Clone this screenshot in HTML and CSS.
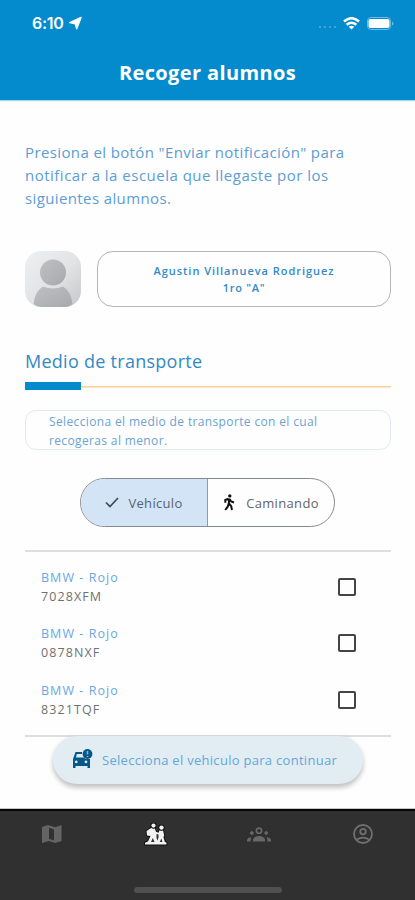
FILE: index.html
```html
<!DOCTYPE html>
<html lang="es">
<head>
<meta charset="utf-8">
<title>Recoger alumnos</title>
<link rel="stylesheet" href="styles.css">
</head>
<body>
<div class="screen">
  <header class="header">
    <div class="status">
      <span class="time">6:10</span>
      <svg class="location" width="13" height="14" viewBox="0 0 14 14"><path d="M13 1 8.300 13.200 6.700 7.800.8 6.600Z" fill="#fff" stroke="#fff" stroke-width="1.500" stroke-linejoin="round"/></svg>
      <span class="signal"><i></i><i></i><i></i><i></i></span>
      <svg class="wifi" width="17" height="13" viewBox="0 0 17 13" fill="none" stroke="#fff" stroke-width="2.600"><path d="M1 4.500Q8.500-2 16 4.500M3.700 7.700Q8.500 3.800 13.300 7.700"/><path d="M5.700 9.700Q8.500 7.700 11.300 9.700L8.500 12.600Z" fill="#fff" stroke="none"/></svg>
      <svg class="battery" width="27" height="13" viewBox="0 0 27 13"><rect x=".5" y=".5" width="23" height="12" rx="3.500" fill="none" stroke="#6bbce4"/><rect x="1.500" y="2" width="21" height="9" rx="2" fill="#fff"/><path d="M25 4.500v4q1.500-.6 1.500-2t-1.500-2Z" fill="#6bbce4"/></svg>
    </div>
    <h1 class="title">Recoger alumnos</h1>
  </header>
  <main class="content">
    <p class="intro">Presiona el botón "Enviar notificación" para<br><span class="intro-wide">notificar a la escuela que llegaste por los</span><br>siguientes alumnos.</p>
    <section class="student">
      <svg class="avatar" width="56" height="56" viewBox="0 0 56 56">
        <defs>
          <linearGradient id="bg" x1="0" y1="0" x2="1" y2="1"><stop offset="0" stop-color="#eff0f1"/><stop offset=".55" stop-color="#e1e2e3"/><stop offset="1" stop-color="#c5c7c9"/></linearGradient>
          <linearGradient id="person" x1="0" y1="0" x2="1" y2="1"><stop offset="0" stop-color="#bec1c3"/><stop offset="1" stop-color="#a7a9ab"/></linearGradient>
        </defs>
        <rect width="56" height="56" rx="16" fill="url(#bg)"/>
        <circle cx="28" cy="21.500" r="13" fill="url(#person)"/>
        <path d="M8.500 53Q10 40 18 35.500Q28 39.500 38 35.500Q46 40 47.500 53Q44 56 39 56H16Q12 56 8.500 53Z" fill="url(#person)"/>
      </svg>
      <div class="student-card"><strong>Agustin Villanueva Rodriguez</strong><strong class="grade">1ro "A"</strong></div>
    </section>
    <h2 class="section-title">Medio de transporte</h2>
    <div class="rule"></div>
    <p class="hint">Selecciona el medio de transporte con el cual<br>recogeras al menor.</p>
    <div class="segments">
      <button class="segment selected"><svg width="14" height="11" viewBox="0 0 14 11"><path d="m1 5.500 4 4L13 1" fill="none" stroke="#3e4852" stroke-width="1.600"/></svg><span>Vehículo</span></button>
      <button class="segment"><svg class="walk" width="12" height="17" viewBox="0 0 12 17"><circle cx="6.800" cy="1.900" r="1.700" fill="#111"/><path d="M6.200 4.500 5.800 9.800M5.500 4.700 2.300 6v2.800M6.500 5l1.700 2.500 2.800 1M5.700 9.500l-1 3.200L2.200 16M6 9.500l2.200 2.700L9 16" fill="none" stroke="#111" stroke-width="2"/></svg><span>Caminando</span></button>
    </div>
    <ul class="vehicles">
      <li><div><span class="model">BMW - Rojo</span><span class="plate">7028XFM</span></div><span class="check"></span></li>
      <li><div><span class="model">BMW - Rojo</span><span class="plate">0878NXF</span></div><span class="check"></span></li>
      <li><div><span class="model">BMW - Rojo</span><span class="plate">8321TQF</span></div><span class="check"></span></li>
    </ul>
    <button class="continue">
      <svg width="21" height="20" viewBox="0 0 21 20"><path fill="#075889" fill-rule="evenodd" d="M3.500 3H10v2H4.800L4 8.500h7.500L14 10h4v9h-2.500v-2H3.500v2H1V10Zm.7 8.500a1.400 1.400 0 1 0 .1 0Zm9.700 0a1.400 1.400 0 1 0 .1 0Z"/><circle cx="15.500" cy="5" r="4.900" fill="#075889"/><path d="M15.500 2v3.500M15.500 7v1" stroke="#8db7ce" stroke-width="1.500"/></svg>
      <span>Selecciona el vehiculo para continuar</span>
    </button>
  </main>
  <nav class="tabs">
    <div class="tab"><svg width="20" height="18" viewBox="0 0 20 18"><path fill="#646464" fill-rule="evenodd" d="M0 2 6 0l7 2.200L19.500 0v16L13 18l-6-2-7 2Zm7 .7v11l5 1.700v-11Z"/></svg></div>
    <div class="tab"><svg width="24" height="23" viewBox="0 0 24 23"><g stroke="#111" stroke-width="2" paint-order="stroke" fill="#f2f2f2" stroke-linejoin="round"><path d="M7.500 4.800h3l1.500 4 2.500 1 1-2.500h3.500l1.200 5-.7 2 1.300 4.500 1.700 1V21.500H1V19.700l3-1.200L6.500 13 3 12.500 2.500 8Z"/><circle cx="9.500" cy="2.600" r="2.100"/><circle cx="17.500" cy="4.600" r="2.200"/></g><path d="m8.800 15-1.800 4h3.500ZM17.300 15.500l-1.500 3.500h2.700ZM12.500 11v4l1 2.500 1-3v-3Z" fill="#303030"/></svg></div>
    <div class="tab"><svg width="24" height="15" viewBox="0 0 24 15"><circle cx="12" cy="3.700" r="2.600" fill="none" stroke="#686868" stroke-width="1.600"/><path d="M6 14.500v-2Q7 9 12 9t6 3.500v2ZM0 14.500v-1.800Q1 10 4 10.200L3.500 14.500ZM24 14.500v-1.800Q23 10 20 10.200l.5 4.300ZM4.800 3.800 7 6 4.800 8.200 2.600 6ZM19.200 3.800 21.400 6l-2.200 2.200L17 6Z" fill="#686868"/></svg></div>
    <div class="tab"><svg width="20" height="20" viewBox="0 0 20 20" fill="none" stroke="#707070" stroke-width="1.800"><circle cx="10" cy="10" r="9"/><circle cx="10" cy="7.600" r="2.800"/><path d="M4 15.500q6-3.800 12 0"/></svg></div>
    <div class="home"></div>
  </nav>
</div>
</body>
</html>
```
FILE: styles.css
```css
* { box-sizing: border-box; }
body { margin: 0; background: #fefefe; font-family: "Open Sans", sans-serif; }
h1, h2, p, ul { margin: 0; padding: 0; }
button { padding: 0; border: 0; background: none; font: inherit; }
span, strong { white-space: nowrap; }
svg { display: block; flex: none; }
.screen { width: 415px; height: 900px; display: flex; flex-direction: column; overflow: hidden; }
.header { height: 100px; flex: none; background: #038bce; color: #fff; box-shadow: 0 1px 1px #a5d4eb; }
.status { height: 46px; display: flex; align-items: center; padding: 0 21px 0 32px; }
.time { font: 600 16px/20px Inter, sans-serif; width: 33px; letter-spacing: -.3px; }
.location { margin-left: 4px; }
.signal { display: flex; gap: 3px; margin-left: auto; margin-top: 8px; }
.signal i { width: 2px; height: 2px; background: #52aedc; border-radius: 1px; }
.wifi { margin-left: 7px; }
.battery { margin-left: 7px; }
.title { margin-top: 12px; text-align: center; font-size: 20px; font-weight: 700; line-height: 30px; letter-spacing: .38px; }
.content { flex: 1; padding: 41px 24px 0 25px; display: flex; flex-direction: column; }
.intro { color: #5b9dd4; font-size: 15px; line-height: 23px; height: 69px; letter-spacing: .38px; white-space: nowrap; }
.intro-wide { letter-spacing: .49px; }
.student { display: flex; gap: 16px; margin-top: 41px; }
.student-card { flex: 1; height: 56px; border: 1px solid #b5b5b5; border-radius: 16px; display: flex; flex-direction: column; align-items: center; justify-content: center; color: #328aca; font-size: 11px; line-height: 17px; letter-spacing: .97px; }
.student-card strong { font-weight: 600; }
.student-card .grade { letter-spacing: .7px; }
.section-title { margin-top: 40px; height: 28px; color: #3289c3; font-size: 18px; line-height: 28px; font-weight: 400; letter-spacing: .27px; }
.rule { height: 8px; margin-top: 7px; background: linear-gradient(#058bcd, #058bcd) 0 0 / 56px 8px no-repeat, linear-gradient(#f9d194, #f9d194) 0 4px / 100% 1.5px no-repeat; }
.hint { height: 40px; margin-top: 20px; padding: 1px 23px; border: 1px solid #e3e8f4; border-radius: 11px; color: #6ba3d3; font-size: 12px; line-height: 19px; letter-spacing: .36px; }
.segments { display: flex; width: 255px; height: 49px; margin: 28px 0 0 55px; border: 1px solid #858a90; border-radius: 25px; overflow: hidden; }
.segment { flex: 1; display: flex; align-items: center; justify-content: center; gap: 9px; color: #646464; font-size: 13px; letter-spacing: .33px; }
.segment.selected { background: #d2e4f6; border-right: 1px solid #929aa3; color: #59636e; }
.segment .walk { margin-right: 2px; }
.vehicles { list-style: none; height: 187px; margin-top: 23px; border-top: 2px solid #dedede; border-bottom: 2px solid #dedede; padding-top: 7px; }
.vehicles li { display: flex; align-items: center; justify-content: space-between; height: 56.300px; padding: 0 35px 0 16px; }
.vehicles li div { display: flex; flex-direction: column; font-size: 12.500px; line-height: 19px; }
.model { color: #68a8e0; letter-spacing: 1.050px; }
.plate { color: #707070; letter-spacing: 1.100px; }
.check { width: 18px; height: 18px; border: 2px solid #444; border-radius: 2px; }
.continue { align-self: center; width: 310px; height: 48px; margin-top: -1px; border-radius: 24px; background: #e2edf3; box-shadow: 0 4px 5px #0003, 0 1px 6px #0001; display: flex; align-items: center; gap: 9px; padding-left: 19px; color: #64a7d8; font-size: 13px; letter-spacing: .29px; z-index: 1; }
.continue svg { margin-top: -3px; }
.tabs { height: 92px; flex: none; border-top: 1px solid #c6c6c6; background: #303030; box-shadow: inset 0 2px #050505; display: grid; grid-template-columns: repeat(4, 1fr); grid-template-rows: 52px 1fr; }
.tab { display: flex; align-items: center; justify-content: center; }
.tab svg { margin-top: -2px; }
.home { grid-column: 1 / -1; justify-self: center; width: 148px; height: 6px; border-radius: 3px; background: #505050; margin-top: 26px; }
```
